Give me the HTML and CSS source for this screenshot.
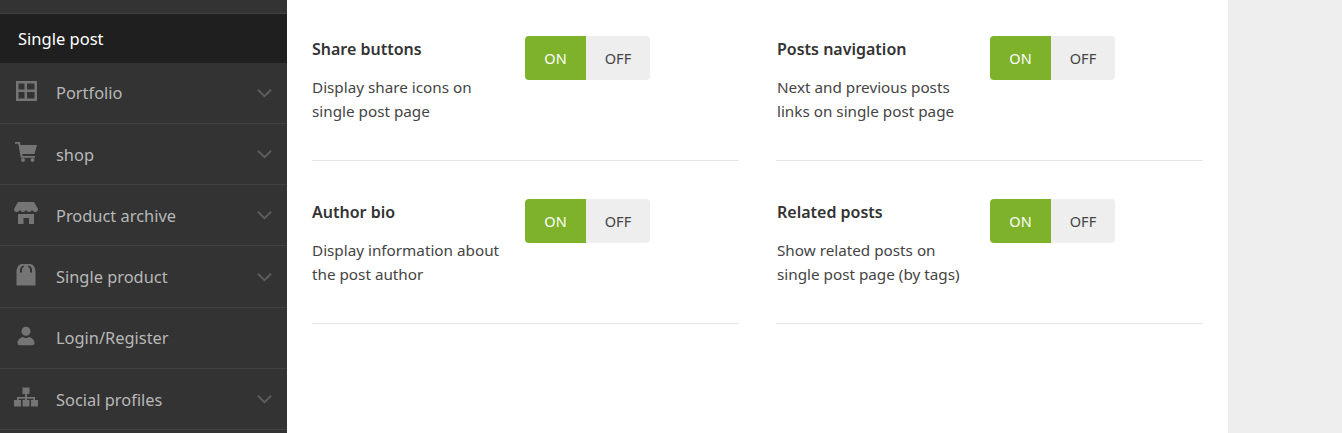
FILE: index.html
```html
<!DOCTYPE html>
<html lang="en">
<head>
  <meta charset="UTF-8" />
  <title>Theme options</title>
  <link rel="stylesheet" href="styles.css">
</head>
<body>
  <div class="page">
    <aside class="sidebar">
      <div class="clipped-item"></div>
      <div class="sub-item">Single post</div>

      <div class="menu-item">
        <svg class="menu-icon" viewBox="0 0 24 24"><path fill-rule="evenodd" d="M2 2h21v20H2zM4.500 4.500v6h6v-6zM13 4.500v6h7.500v-6zM4.500 13v6.500h6V13zM13 13v6.500h7.500V13z"/></svg>
        <span class="menu-label">Portfolio</span>
        <svg class="chevron" viewBox="0 0 16 10"><path d="M1 1.500l7 7 7-7"/></svg>
      </div>
      <div class="menu-item">
        <svg class="menu-icon" viewBox="0 0 24 24"><path d="M1 2h5l.5 3H23l-2.500 9H8.300l.3 2H21v1.800H6.800L4.300 3.800H1z"/><circle cx="9" cy="20" r="2"/><circle cx="18.500" cy="20" r="2"/></svg>
        <span class="menu-label">shop</span>
        <svg class="chevron" viewBox="0 0 16 10"><path d="M1 1.500l7 7 7-7"/></svg>
      </div>
      <div class="menu-item">
        <svg class="menu-icon" viewBox="0 0 24 24"><path d="M4 1h16l4 7c0 2-1 3-2.500 3S19 10 18 9c-.7 1.300-2 2-3 2s-2.300-.7-3-2c-.7 1.300-2 2-3 2S6.700 10.300 6 9c-1 1-2 2-3.500 2S0 10 0 8z"/><path d="M4 13h16v10h-5v-6H9.500v6H4z"/></svg>
        <span class="menu-label">Product archive</span>
        <svg class="chevron" viewBox="0 0 16 10"><path d="M1 1.500l7 7 7-7"/></svg>
      </div>
      <div class="menu-item">
        <svg class="menu-icon" viewBox="0 0 24 24"><path fill-rule="evenodd" d="M2.500 9C2.500 4 5 1 8 1h8c3 0 5.500 3 5.500 8v13.500h-19zM6 9.500h2V6.500c0-1 .6-2 1.800-2.500V2.400C7.500 3 6 4.500 6 6.500zM18 9.500h-2V6.500c0-1-.6-2-1.800-2.500V2.400C16.500 3 18 4.500 18 6.500z"/></svg>
        <span class="menu-label">Single product</span>
        <svg class="chevron" viewBox="0 0 16 10"><path d="M1 1.500l7 7 7-7"/></svg>
      </div>
      <div class="menu-item">
        <svg class="menu-icon" viewBox="0 0 24 24"><circle cx="12" cy="7.300" r="4.500"/><path d="M3.500 19c0-3.500 3-5.500 5.500-6 .8.600 1.800 1 3 1s2.200-.4 3-1c2.500.5 5.500 2.500 5.500 6 0 1.500-1 2.200-2.500 2.200H6c-1.500 0-2.500-.7-2.500-2.200z"/></svg>
        <span class="menu-label">Login/Register</span>
      </div>
      <div class="menu-item">
        <svg class="menu-icon" viewBox="0 0 24 24"><path d="M8.500 2.500h7V9H13v3h8v3h3v6.500h-7V15h2.300v-1.300H13V15h2.500v6.500h-7V15H11v-1.300H4.700V15H7v6.500H0V15h3v-3h8V9H8.500z"/></svg>
        <span class="menu-label">Social profiles</span>
        <svg class="chevron" viewBox="0 0 16 10"><path d="M1 1.500l7 7 7-7"/></svg>
      </div>
    </aside>

    <main class="content">
      <div class="options">
        <section class="option">
          <div class="option-text">
            <h3>Share buttons</h3>
            <p>Display share icons on single post page</p>
          </div>
          <div class="toggle"><span class="toggle-on">ON</span><span class="toggle-off">OFF</span></div>
        </section>
        <section class="option">
          <div class="option-text">
            <h3>Posts navigation</h3>
            <p>Next and previous posts links on single post page</p>
          </div>
          <div class="toggle"><span class="toggle-on">ON</span><span class="toggle-off">OFF</span></div>
        </section>
        <section class="option">
          <div class="option-text">
            <h3>Author bio</h3>
            <p>Display information about the post author</p>
          </div>
          <div class="toggle"><span class="toggle-on">ON</span><span class="toggle-off">OFF</span></div>
        </section>
        <section class="option">
          <div class="option-text">
            <h3>Related posts</h3>
            <p>Show related posts on single post page (by tags)</p>
          </div>
          <div class="toggle"><span class="toggle-on">ON</span><span class="toggle-off">OFF</span></div>
        </section>
      </div>
    </main>
  </div>
</body>
</html>
```

FILE: styles.css
```css
html, body {
  margin: 0;
  height: 433px;
  overflow: hidden;
}

body {
  font-family: "Noto Sans", "Open Sans", sans-serif;
  background-color: #eeeeee;
}

.page {
  display: flex;
  width: 1228px;
  height: 433px;
  background-color: #fff;
}

.sidebar {
  width: 287px;
  flex-shrink: 0;
  background-color: #333333;
}

.clipped-item {
  height: 13px;
  border-bottom: 1px solid #414141;
}

.sub-item {
  height: 48.6px;
  line-height: 50px;
  padding-left: 18px;
  font-size: 16.5px;
  color: #fff;
  background-color: #1f1f1f;
}

.menu-item {
  display: flex;
  align-items: center;
  height: 60.3px;
  border-bottom: 1px solid #414141;
  color: #b8b8b8;
  font-size: 16.4px;
}

.menu-icon {
  width: 24px;
  height: 24px;
  margin-left: 14px;
  margin-right: 18px;
  margin-top: -4px;
  flex-shrink: 0;
  fill: #757575;
}

.menu-label {
  flex: 1;
}

.chevron {
  width: 15px;
  height: 10px;
  margin-right: 15px;
  fill: none;
  stroke: #5e5e5e;
  stroke-width: 2;
}

.content {
  flex: 1;
  padding: 0 25px;
}

.options {
  display: grid;
  grid-template-columns: 427px 427px;
  column-gap: 37px;
}

.option {
  display: flex;
  align-items: flex-start;
  height: 124px;
  padding-top: 36px;
  margin-bottom: 2px;
  border-bottom: 1px solid #e6e6e6;
}

.option:nth-child(even) {
  padding-left: 1px;
  width: 426px;
}

.option-text {
  width: 213px;
  flex-shrink: 0;
}

.option-text h3 {
  margin: -0.5px 0 13px;
  font-size: 16px;
  line-height: 26px;
  font-weight: 600;
  color: #333;
}

.option-text p {
  margin: 0;
  width: 195px;
  font-size: 15.25px;
  line-height: 24.7px;
  color: #444;
}

.toggle {
  display: flex;
  width: 125px;
  height: 44px;
  line-height: 44px;
  font-size: 14.5px;
  text-align: center;
  border-radius: 4px;
  overflow: hidden;
}

.toggle-on {
  width: 61px;
  color: #fff;
  background-color: #7eb22a;
}

.toggle-off {
  width: 64px;
  color: #444;
  background-color: #eeeeee;
}
```
